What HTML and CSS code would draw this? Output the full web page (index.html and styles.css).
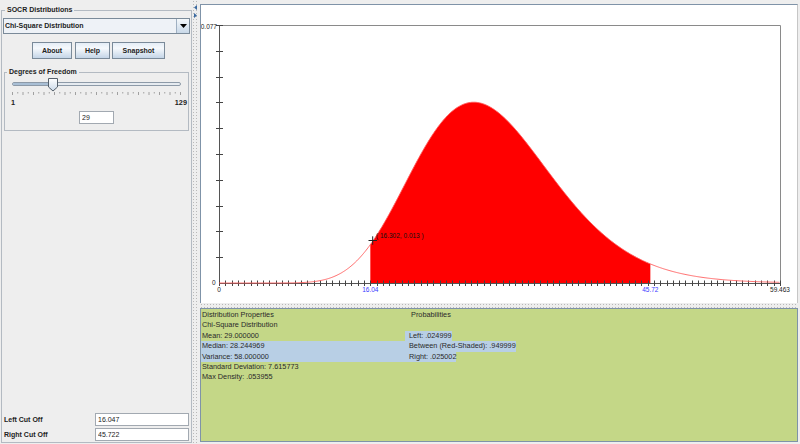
FILE: index.html
```html
<!DOCTYPE html>
<html>
	<head>
		<meta charset="utf-8" />
		<title>SOCR Distributions</title>
		<link rel="stylesheet" href="styles.css">
	</head>
	<body>
		<div id="app">
			<fieldset id="side">
				<legend>SOCR Distributions</legend>
				<div class="combo">
					<span class="combo-text">Chi-Square Distribution</span>
					<span class="combo-button"><svg width="7" height="4"><path d="M0 0h7L3.5 4z" /></svg></span>
				</div>
				<div class="buttons">
					<button class="button about">About</button>
					<button class="button help">Help</button>
					<button class="button snap">Snapshot</button>
				</div>
				<fieldset id="dof">
					<legend>Degrees of Freedom</legend>
					<svg id="slider" width="182" height="19">
						<defs>
							<linearGradient id="thumbFill" x1="0" y1="0" x2="0" y2="1">
								<stop offset="0" stop-color="#ffffff" />
								<stop offset="1" stop-color="#c9d8e8" />
							</linearGradient>
						</defs>
						<rect x="7.5" y="5.5" width="168" height="3" rx="1.5" fill="#e6ebf0" stroke="#8d9aa8" />
						<rect x="8" y="6" width="40" height="2" fill="#a9bfd5" />
						<path d="M43.5 1.5h9v8.5l-4.5 4l-4.5-4z" fill="url(#thumbFill)" stroke="#55606b" />
						<g id="sliderTicks" stroke="#a0a0a0"></g>
					</svg>
					<div class="scale"><span>1</span><span>129</span></div>
					<div class="dof-row"><input class="field dof-field" value="29"></div>
				</fieldset>
				<div class="spacer"></div>
				<div class="cut"><label>Left Cut Off</label><input class="field" value="16.047"></div>
				<div class="cut"><label>Right Cut Off</label><input class="field" value="45.722"></div>
			</fieldset>
			<div id="vsplit">
				<svg width="5" height="14"><path d="M4 0v5L1 2.5z M1 8v5l3-2.5z" fill="#3b6aa0" /></svg>
			</div>
			<div id="main">
				<div id="chart">
					<svg id="plot" width="596" height="298" viewBox="201 5 596 298"></svg>
				</div>
				<div id="hsplit"></div>
				<div id="info">
					<div class="row"><span class="col">Distribution Properties</span><span>&nbsp;Probabilities</span></div>
					<div class="row"><span class="col">Chi-Square Distribution</span></div>
					<div class="row"><span class="col">Mean: 29.000000</span><span class="sel sel-start">Left: .024999</span></div>
					<div class="row sel"><span class="col">Median: 28.244969</span><span>Between (Red-Shaded): .949999</span></div>
					<div class="row sel"><span class="col">Variance: 58.000000</span><span>Right: .025002</span></div>
					<div class="row"><span class="col">Standard Deviation: 7.615773</span></div>
					<div class="row"><span class="col">Max Density: .053955</span></div>
				</div>
			</div>
		</div>
		<script type="text/javascript" src="chart.js"></script>
	</body>
</html>
```

FILE: styles.css
```css
html, body {
	margin: 0; padding: 0;
	width: 800px; height: 444px;
	overflow: hidden;
	background-color: #eeeeee;
	font: 7px "Liberation Sans", Arial, sans-serif;
	color: #222222;
}
#app {
	display: flex;
	height: 444px;
}
#side {
	display: flex; flex-direction: column;
	box-sizing: border-box;
	width: 191px; margin: 6px 0 1px 1px; padding: 0 1px 1px 1px;
	border: 1px solid #b3bac2;
	min-width: 0;
}
#side legend, #dof legend {
	margin-left: 2px; padding: 0 2px;
	font-weight: bold; font-size: 7px; line-height: 8px;
	color: #222222;
}
.combo {
	display: flex;
	height: 16px; margin-top: 4px;
	box-sizing: border-box;
	border: 1px solid #7a8a99;
	background: #eef2f7;
}
.combo-text {
	flex: 1;
	padding-left: 1px;
	font-weight: bold; line-height: 14px;
}
.combo-button {
	display: flex; align-items: center; justify-content: center;
	width: 12px;
	border-left: 1px solid #9fb0c2;
	background: linear-gradient(#f4f8fb, #c8d8e8);
}
.buttons {
	display: flex;
	margin: 8px 0 0 29px;
}
.button {
	height: 17px; padding: 0;
	border: 1px solid #7a8a99;
	background: linear-gradient(#e4edf6, #f6f9fc 35%, #c4d5e7);
	font: bold 7px "Liberation Sans", Arial, sans-serif;
	color: #222222;
}
.about { width: 40px; }
.help { width: 35px; margin-left: 3px; }
.snap { width: 53px; margin-left: 2px; }
#dof {
	display: flex; flex-direction: column;
	margin: 9px 1px 0 1px; padding: 0 0 6px 0;
	border: 1px solid #b3bac2;
	min-width: 0;
}
#slider {
	display: block;
	margin-top: 1px;
}
.scale {
	display: flex; justify-content: space-between;
	margin-top: 3px; padding: 0 1px 0 6px;
	font-weight: bold; font-size: 7.3px; line-height: 8px;
}
.dof-row {
	display: flex; justify-content: center;
	margin-top: 4px;
}
.field {
	box-sizing: border-box;
	width: 94px; height: 13px; margin: 0; padding: 0 2px;
	border: 1px solid #a2a9b1;
	background: #ffffff;
	font: 7px "Liberation Sans", Arial, sans-serif;
	color: #222222;
}
.dof-field { width: 35px; }
.spacer { flex: 1; }
.cut {
	display: flex; align-items: center;
	margin-top: 2px; padding-right: 1px;
}
.cut label {
	flex: 1;
	padding-left: 1px;
	font-weight: bold;
}
#vsplit {
	width: 7px;
	padding: 5px 0 0 1px;
	box-sizing: border-box;
	background-image: radial-gradient(#b9b9b9 0.6px, transparent 0.9px);
	background-size: 3px 3px;
}
#vsplit svg { display: block; }
#main {
	flex: 1;
	display: flex; flex-direction: column;
	padding: 4px 2px 2px 1px;
	min-width: 0;
}
#chart {
	height: 298px;
	border-top: 1px solid #7f93a8; border-left: 1px solid #7f93a8; border-right: 1px solid #c6c6c6;
	background: #ffffff;
}
#plot { display: block; }
#hsplit {
	height: 5px;
	background-image: radial-gradient(#b9b9b9 0.6px, transparent 0.9px);
	background-size: 3px 3px;
}
#info {
	flex: 1;
	padding-top: 1px;
	border: 1px solid #7f93a8;
	background: #c4d787;
	font-size: 7.3px; line-height: 10.4px;
	color: #2a2a2a;
}
.row {
	display: flex;
	width: fit-content;
	padding-left: 1px;
	white-space: pre;
}
.col { width: 207px; }
.sel { background: #b8cfe5; }
.sel-start { margin-left: -4px; padding-left: 4px; }
```

FILE: chart.js
```js
(function () {
	var svgNS = 'http://www.w3.org/2000/svg';

	function add(parent, name, attrs, text) {
		var el = document.createElementNS(svgNS, name);
		for (var key in attrs)
			el.setAttribute(key, attrs[key]);
		if (text !== undefined)
			el.textContent = text;
		parent.appendChild(el);
		return el;
	}

	// slider ticks
	var ticks = document.getElementById('sliderTicks');
	for (var i = 0; i <= 32; i++) {
		var tx = 7.5 + i * 168 / 32;
		add(ticks, 'line', { x1: tx, y1: 15, x2: tx, y2: i % 2 ? 16.5 : 18 });
	}

	// chi-square density, 29 degrees of freedom
	var df = 29, xMax = 59.463, yMax = 0.077;
	var pLeft = 219, pRight = 780, pTop = 25, pBottom = 283;
	var gamma = Math.sqrt(Math.PI);
	for (var v = 0.5; v < df / 2; v++)
		gamma *= v;
	var norm = Math.pow(2, df / 2) * gamma;

	function density(x) {
		if (x <= 0)
			return 0;
		return Math.exp((df / 2 - 1) * Math.log(x) - x / 2) / norm;
	}
	function px(x) { return pLeft + x * (pRight - pLeft) / xMax; }
	function py(y) { return pBottom - y * (pBottom - pTop) / yMax; }

	var plot = document.getElementById('plot');

	// shaded area
	var a = 16.04, b = 45.72;
	var d = 'M' + px(a).toFixed(2) + ' ' + pBottom;
	for (var x = a; x < b; x += 0.05)
		d += 'L' + px(x).toFixed(2) + ' ' + py(density(x)).toFixed(2);
	d += 'L' + px(b).toFixed(2) + ' ' + py(density(b)).toFixed(2) + 'L' + px(b).toFixed(2) + ' ' + pBottom + 'Z';
	add(plot, 'path', { d: d, fill: '#ff0000' });

	// frame
	add(plot, 'path', { d: 'M219 25.5H780.5V283', fill: 'none', stroke: '#8a8a8a' });
	add(plot, 'path', { d: 'M219.5 25V283.5H780', fill: 'none', stroke: '#555555' });

	// axis ticks
	var tg = add(plot, 'g', { stroke: '#444444' });
	for (var i = 0; i <= 89; i++) {
		var tx = Math.round(pLeft + i * (pRight - pLeft) / 89) + 0.5;
		add(tg, 'line', { x1: tx, y1: 280.5, x2: tx, y2: 286 });
	}
	for (var j = 1; j <= 10; j++) {
		var ty = Math.round(pBottom - j * (pBottom - pTop) / 10) + 0.5;
		add(tg, 'line', { x1: 216, y1: ty, x2: 223, y2: ty });
	}

	// density curve
	var c = '';
	for (var x = 0; x <= xMax; x += 0.1)
		c += (c ? 'L' : 'M') + px(x).toFixed(2) + ' ' + py(density(x)).toFixed(2);
	add(plot, 'path', { d: c, fill: 'none', stroke: '#ff5a5a', 'stroke-width': 0.9 });

	// crosshair
	add(plot, 'path', { d: 'M368.5 240.5h8.5M372.7 236.3v8.5', stroke: '#222222', fill: 'none' });

	// labels
	var font = { 'font-family': 'Liberation Sans, Arial, sans-serif', 'font-size': 6.5, fill: '#222222' };
	function label(x, y, text, anchor, color) {
		var attrs = { x: x, y: y, 'text-anchor': anchor };
		for (var k in font)
			attrs[k] = font[k];
		if (color)
			attrs.fill = color;
		add(plot, 'text', attrs, text);
	}
	label(217, 29.3, '0.077', 'end');
	label(215.5, 284.5, '0', 'end');
	label(219, 291.5, '0', 'middle');
	label(px(a), 292, '16.04', 'middle', '#3b3bff');
	label(px(b), 292, '45.72', 'middle', '#3b3bff');
	label(780, 292, '59.463', 'middle');
	label(376, 237.5, '( 16.302, 0.013 )', 'start', '#111111');
})();
```
